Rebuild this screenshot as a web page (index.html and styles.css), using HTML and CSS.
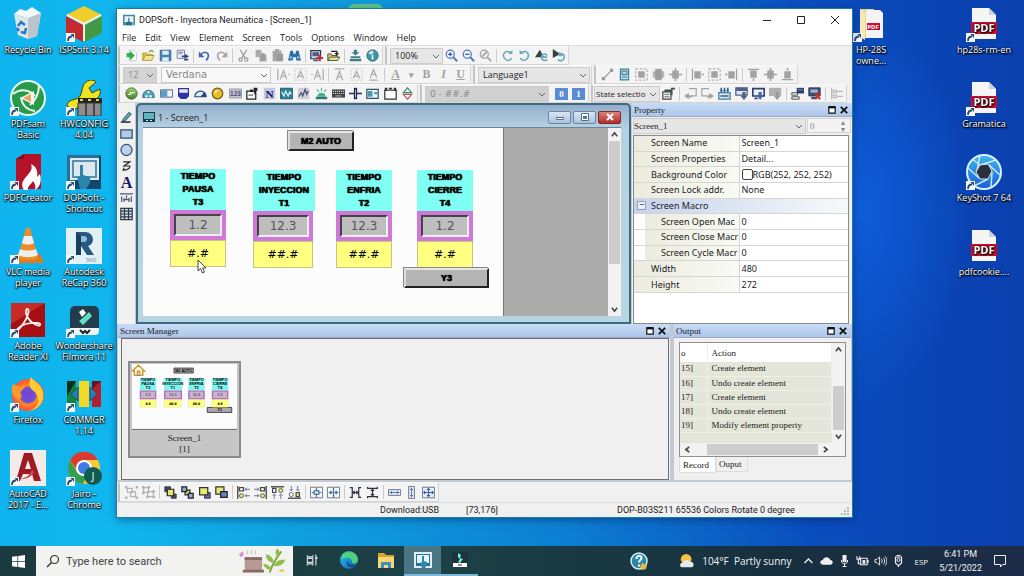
FILE: index.html
```html
<!DOCTYPE html>
<html lang="en">
<head>
<meta charset="utf-8">
<title>DOPSoft - Inyectora Neumática</title>
<link rel="stylesheet" href="styles.css">
</head>
<body>
<svg class="sprite" aria-hidden="true">
  <defs>
    <linearGradient id="gGreen" x1="0" y1="0" x2="0" y2="1"><stop offset="0" stop-color="#9fd36a"/><stop offset="1" stop-color="#3f7f2c"/></linearGradient>
    <radialGradient id="gFox"><stop offset="0" stop-color="#7a3fd0"/><stop offset=".45" stop-color="#6a4fd8"/><stop offset=".6" stop-color="#ff8a1f"/><stop offset="1" stop-color="#ff4a3d"/></radialGradient>
    <linearGradient id="gEdge" x1="0" y1="0" x2="1" y2="1"><stop offset="0" stop-color="#2fc3e6"/><stop offset=".5" stop-color="#1b8fd8"/><stop offset="1" stop-color="#0c4fa5"/></linearGradient>
    <linearGradient id="gShut" x1="0" y1="0" x2="0" y2="1"><stop offset="0" stop-color="#3fb6e8"/><stop offset="1" stop-color="#1a5fd8"/></linearGradient>
  </defs>
  <symbol id="link" viewBox="0 0 9 9"><path fill="#f4f8fb" d="M0 0h9v9H0z"/><path fill="none" stroke="#2b4a70" stroke-width="1.8" d="M2 8c0-3 1-4.500 4-4.500"/><path fill="#2b4a70" d="M4.500 1H8v4z"/></symbol>
  <symbol id="app" viewBox="0 0 16 16"><path fill="#3d8aa5" d="M0 1h16v14H0z"/><path fill="#e8f4f8" d="M2 3h12v8H2z"/><path fill="#2a6f90" d="M4 15v-4l3-1V5h1.500v5l3 1v4z"/><path fill="#72b6cc" d="M12 11h3v4h-3z"/></symbol>
  <symbol id="doc" viewBox="0 0 16 16"><path fill="#fff" stroke="#b9c4cc" d="M5 1.500h6l3 3v10H5z"/><path fill="#2fae4e" d="M2 5h4V2l6 6-6 6v-4H2z"/></symbol>
  <symbol id="open" viewBox="0 0 16 16"><path fill="#e5c64c" stroke="#ab8f2a" d="M1 14V5h5l1 2h6v2"/><path fill="#f6e58f" stroke="#ab8f2a" d="M1 14l3-6h11l-3 6z"/><path fill="none" stroke="#5f9a3a" stroke-width="1.500" d="M9 4c1-3 4-2 5 0"/></symbol>
  <symbol id="save" viewBox="0 0 16 16"><path fill="#4684b5" stroke="#2d5f8c" d="M1.500 1.500h13v13h-13z"/><path fill="#dceaf3" d="M4 2h8v5H4zM4 10h8v5H4z"/></symbol>
  <symbol id="export" viewBox="0 0 16 16"><path fill="#f4f4fb" stroke="#666c90" d="M1.500 1.500h9v10h-9z"/><path stroke="#56599b" d="M3 4h6M3 6h4"/><path fill="none" stroke="#37417f" stroke-width="2" d="M7 9h6M10 13h5"/><path fill="#37417f" d="M11 6l5 3-5 3z"/></symbol>
  <symbol id="undo" viewBox="0 0 16 16"><path fill="none" stroke="#3d63ae" stroke-width="2" d="M4 6c7-5 12 1 6 8"/><path fill="#3d63ae" d="M1 3v7h7z"/></symbol>
  <symbol id="redo" viewBox="0 0 16 16"><path fill="none" stroke="#a4a4a4" stroke-width="2" d="M12 6C5 1 0 7 6 14"/><path fill="#a4a4a4" d="M15 3v7H8z"/></symbol>
  <symbol id="cut" viewBox="0 0 16 16"><path fill="none" stroke="#9c9c9c" stroke-width="1.500" d="M4 1l6 10M12 1L6 11"/><circle cx="4.500" cy="13" r="2" fill="none" stroke="#9c9c9c" stroke-width="1.500"/><circle cx="11.500" cy="13" r="2" fill="none" stroke="#9c9c9c" stroke-width="1.500"/></symbol>
  <symbol id="copy" viewBox="0 0 16 16"><path fill="#a9a9a9" d="M2 1h7v9H2z"/><path fill="#9d9d9d" stroke="#c4c4c4" d="M7 5h5l3 3v7H7z"/></symbol>
  <symbol id="paste" viewBox="0 0 16 16"><path fill="#a6a6a6" d="M2 2h3V0h5v2h3v13H2z"/><path fill="#989898" d="M7 6h8v9H7z"/></symbol>
  <symbol id="find" viewBox="0 0 16 16"><path fill="#2b6cae" d="M3 2h3l1 4h2l1-4h3l3 12h-6v-4H6v4H0z"/><path fill="#87b8e0" d="M2 9h3v3H2zM11 9h3v3h-3z"/></symbol>
  <symbol id="newscr" viewBox="0 0 16 16"><path fill="#cfdbe8" stroke="#2e3355" stroke-width="1.500" d="M1 2h12v10H1z"/><path fill="#4a5a80" d="M3 4h8v5H3zM4 13h6v2H4z"/><path stroke="#c9282b" stroke-width="2.500" d="M12 7v8M8 11h8"/></symbol>
  <symbol id="openscr" viewBox="0 0 16 16"><path fill="#d6c65c" stroke="#40402a" d="M1 14V6h4l1 2h7v6z"/><path fill="#f3e9a0" stroke="#40402a" d="M1 14l3-4h12l-3 4z"/><path fill="none" stroke="#222" stroke-width="1.500" d="M5 3h7v3"/><path fill="#222" d="M9 5h6l-3 3z"/></symbol>
  <symbol id="down" viewBox="0 0 16 16"><path fill="#3e7f86" d="M6 1h4v3h3L8 8 3 4h3zM2 9h12v2H2zM1 12h14v3H1z"/></symbol>
  <symbol id="info" viewBox="0 0 16 16"><circle cx="8" cy="8" r="7" fill="#3f95a8" stroke="#246576"/><path fill="#b9e4ec" d="M3 6a5 5 0 0 1 6-4l-2 5z"/><path stroke="#fff" stroke-width="2" d="M8 7v6M8 3.500v2"/></symbol>
  <symbol id="zin" viewBox="0 0 16 16"><circle cx="6.500" cy="6.500" r="5" fill="#eef4ff" stroke="#5377b8" stroke-width="1.500"/><path stroke="#5377b8" stroke-width="2.500" d="M10 10l5 5"/><path stroke="#2f56a4" stroke-width="1.500" d="M4 6.500h5M6.500 4v5"/></symbol>
  <symbol id="zout" viewBox="0 0 16 16"><circle cx="6.500" cy="6.500" r="5" fill="#eef4ff" stroke="#5377b8" stroke-width="1.500"/><path stroke="#5377b8" stroke-width="2.500" d="M10 10l5 5"/><path stroke="#2f56a4" stroke-width="1.500" d="M4 6.500h5"/></symbol>
  <symbol id="zno" viewBox="0 0 16 16"><circle cx="6.500" cy="6.500" r="5" fill="#f1f1f1" stroke="#a0a0a0" stroke-width="1.500"/><path stroke="#a0a0a0" stroke-width="2" d="M10 10l5 5M3.500 9.500l6-6"/></symbol>
  <symbol id="rotl" viewBox="0 0 16 16"><path fill="none" stroke="#6aa5b8" stroke-width="1.800" d="M11 4C6 1 1 6 4 11s8 3 9 0"/><path fill="#6aa5b8" d="M9 6h5V1z"/></symbol>
  <symbol id="rotr" viewBox="0 0 16 16"><path fill="none" stroke="#6aa5b8" stroke-width="1.800" d="M5 4c5-3 10 2 7 7s-8 3-9 0"/><path fill="#6aa5b8" d="M7 6H2V1z"/></symbol>
  <symbol id="flipa" viewBox="0 0 16 16"><path fill="#35413f" d="M0 10L6 1l5 9z"/><path fill="none" stroke="#6aa5b8" stroke-width="2" d="M15 8c-2-3-7-2-7 2s5 5 7 3M9 10h6"/></symbol>
  <symbol id="flipb" viewBox="0 0 16 16"><path fill="#35413f" d="M1 0l9 6-9 5z"/><path fill="none" stroke="#6aa5b8" stroke-width="2" d="M8 7c4-3 8 0 7 4s-5 4-8 2M9 4v4h4"/></symbol>
  <symbol id="fa1" viewBox="0 0 16 16"><path fill="none" stroke="#aaa" stroke-width="1.500" d="M1 1v14M4 14L8 3l4 11M5.500 10h5M14 8h2"/></symbol>
  <symbol id="fa2" viewBox="0 0 16 16"><path fill="none" stroke="#aaa" stroke-width="1.500" d="M4 13L8 4l4 9M5.500 10h5"/><path fill="none" stroke="#bbb" stroke-dasharray="2" d="M1 1h14v14H1z"/></symbol>
  <symbol id="fa3" viewBox="0 0 16 16"><path fill="none" stroke="#aaa" stroke-width="1.500" d="M15 1v14M4 14L8 3l4 11M5.500 10h5M0 8h2"/></symbol>
  <symbol id="fa4" viewBox="0 0 16 16"><path fill="none" stroke="#aaa" stroke-width="1.500" d="M2 1h12M4 15L8 4l4 11M5.500 11h5"/></symbol>
  <symbol id="fa5" viewBox="0 0 16 16"><path fill="none" stroke="#aaa" stroke-width="1.500" d="M3 15h10M4 12L8 2l4 10M5.500 8h5"/></symbol>
  <symbol id="line" viewBox="0 0 16 16"><path stroke="#999" stroke-width="1.500" d="M3 13L13 3"/><path fill="#999" d="M1 11h4v4H1zM11 1h4v4h-4z"/></symbol>
  <symbol id="bluedoc" viewBox="0 0 16 16"><path fill="#b9dbea" stroke="#3f7f9a" stroke-width="1.500" d="M3 1.500h10v13H3z"/><path fill="none" stroke="#24617e" d="M5 4h6v4H5zM5 11h6"/></symbol>
  <symbol id="al1" viewBox="0 0 16 16"><path fill="#a2a2a2" d="M4 4h8v8H4z"/><path fill="none" stroke="#b0b0b0" stroke-dasharray="3 2" stroke-width="1.500" d="M1 1h14v14H1z"/></symbol>
  <symbol id="al2" viewBox="0 0 16 16"><path fill="#a2a2a2" d="M4 1h8v14H4z"/><path fill="#b6b6b6" d="M1 4h14v8H1z"/><path fill="#9c9c9c" d="M4 3h8v10H4z"/></symbol>
  <symbol id="al3" viewBox="0 0 16 16"><path fill="#a2a2a2" d="M4 3h8v10H4zM0 7h16v2H0zM7 0h2v16H7z"/></symbol>
  <symbol id="al4" viewBox="0 0 16 16"><path fill="#a2a2a2" d="M1 1h1.500v14H1zM4 4h8v9H4zM13 7h3v2h-3z"/></symbol>
  <symbol id="al5" viewBox="0 0 16 16"><path fill="#a2a2a2" d="M13.500 1H15v14h-1.500zM4 4h8v9H4zM0 7h3v2H0z"/></symbol>
  <symbol id="al6" viewBox="0 0 16 16"><path fill="#a2a2a2" d="M1 1h14v1.500H1zM4 3h8v9H4zM7 13h2v3H7z"/></symbol>
  <symbol id="al7" viewBox="0 0 16 16"><path fill="#a2a2a2" d="M1 13.500h14V15H1zM4 4h8v9H4zM7 0h2v3H7z"/></symbol>
  <symbol id="e1" viewBox="0 0 16 16"><circle cx="8" cy="8" r="7" fill="url(#gGreen)" stroke="#4d5b40"/><path fill="none" stroke="#eaffd8" stroke-width="1.500" d="M4 9h3V7h5"/></symbol>
  <symbol id="e2" viewBox="0 0 16 16"><path fill="#4fa3b5" stroke="#1f5f70" d="M1 11a7 7 0 0 1 14 0v2H1z"/><path fill="#e6f5f8" d="M4 10h3v3H4zM9 10h3v3H9zM7 5h2v3H7z"/></symbol>
  <symbol id="e3" viewBox="0 0 16 16"><path fill="#eef6fb" stroke="#364e66" d="M.5 3.500h15v9H.5z"/><path fill="#5b9dc8" d="M1 4h8v8H1z"/></symbol>
  <symbol id="e4" viewBox="0 0 16 16"><path fill="#e8e8fa" stroke="#33368a" stroke-width="1.500" d="M2 2h12v9l-3 3H5l-3-3z"/><path fill="#2f33a8" d="M2 7h12v4l-3 3H5l-3-3z"/></symbol>
  <symbol id="e5" viewBox="0 0 16 16"><path fill="#d6ebf7" stroke="#2b4b66" stroke-width="1.500" d="M1 12a7 7 0 0 1 14 0z"/><path fill="#243b86" d="M8 12l5-6 2 6z"/></symbol>
  <symbol id="e6" viewBox="0 0 16 16"><circle cx="8" cy="8" r="6.500" fill="#e6bd2b" stroke="#6e5a1a" stroke-width="1.500"/><path fill="#fbe992" d="M4 7a4 4 0 0 1 5-3l-3 4z"/></symbol>
  <symbol id="e7" viewBox="0 0 16 16"><path fill="#c5c5d2" stroke="#88889c" d="M.5 2.500h15v11H.5z"/><text class="g123" x="8" y="11">123</text></symbol>
  <symbol id="e8" viewBox="0 0 16 16"><path fill="#fbfbfb" stroke="#222" stroke-width="1.500" d="M1 5h11v10H1z"/><path fill="#222" d="M5 3h4v3H5zM9 1h5v4h-2v4h-2V4z"/><path stroke="#222" d="M3 10h6"/></symbol>
  <symbol id="e9" viewBox="0 0 16 16"><path fill="#c7c7de" d="M1 1h14v14H1z"/><text class="gn" x="8" y="13">N</text></symbol>
  <symbol id="e10" viewBox="0 0 16 16"><path fill="#2c7f94" stroke="#174f5e" d="M.5 1.500h15v13H.5z"/><path fill="none" stroke="#d4f4fa" stroke-width="1.500" d="M2 6l3 5 2-6 3 6 2-5 2 3"/></symbol>
  <symbol id="e11" viewBox="0 0 16 16"><path fill="#cfcfdc" d="M1 1h14v14H1z"/><path fill="none" stroke="#4a4a74" stroke-width="1.500" d="M2 12l3-5 2 4 3-8 2 6 2-4"/></symbol>
  <symbol id="e12" viewBox="0 0 16 16"><path fill="#48b08c" d="M3 12a5 5 0 0 1 10 0z"/><path fill="#277a72" d="M1 12h14v3H1z"/><path stroke="#55b8a2" stroke-width="1.500" d="M8 1v4M2 3l3 3M14 3l-3 3"/></symbol>
  <symbol id="e13" viewBox="0 0 16 16"><path fill="#3e3e3e" d="M0 3h16v10H0z"/><path stroke="#d2d2d2" stroke-dasharray="1.500 1" stroke-width="1.500" d="M1 5.500h14M1 8h14"/><path stroke="#d2d2d2" d="M4 11h8"/></symbol>
  <symbol id="e14" viewBox="0 0 16 16"><path stroke="#36366a" stroke-width="2" d="M0 8h16"/><path fill="#20205a" d="M6 1h4v14H6z"/><path stroke="#ddb" d="M8 3v10"/></symbol>
  <symbol id="e15" viewBox="0 0 16 16"><path fill="#eef8fa" stroke="#2c5664" stroke-width="1.500" d="M1 3h14v11H1z"/><path fill="#4b9bb0" d="M2 5h6v7H2zM10 6h4v3h-4z"/></symbol>
  <symbol id="e16" viewBox="0 0 16 16"><path fill="#fff" stroke="#333" stroke-width="1.500" d="M1 4h14v11H1z"/><path fill="#333" d="M1 1h3v4H1zM6 1h4v2H6zM12 1h3v4h-3z"/></symbol>
  <symbol id="e17" viewBox="0 0 16 16"><path fill="#fff" stroke="#3b8a70" stroke-width="1.500" d="M8 1l5 6H3z"/><path fill="#fff" stroke="#b75a66" stroke-width="1.500" d="M3 9h10l-5 6z"/></symbol>
  <symbol id="s1" viewBox="0 0 16 16"><path fill="#eee" stroke="#444" stroke-width="1.500" d="M1 6h10v9H1z"/><path fill="#3d5055" d="M3 3h8v3H3zM11 1h5v2h-3v7h-2z"/><path stroke="#555" d="M3 9h6M3 12h6"/></symbol>
  <symbol id="s2" viewBox="0 0 16 16"><path fill="none" stroke="#a5a5a5" stroke-width="1.500" d="M6 2h9v9H9"/><path fill="#a5a5a5" d="M0 11l6-4v3h4v3H6v2z"/></symbol>
  <symbol id="s3" viewBox="0 0 16 16"><path fill="none" stroke="#a5a5a5" stroke-width="1.500" d="M10 2H1v9h6"/><path fill="#a5a5a5" d="M16 11l-6-4v3H7v3h3v2z"/></symbol>
  <symbol id="s4" viewBox="0 0 16 16"><path fill="#d5e6f2" stroke="#4a7d9e" stroke-width="1.500" d="M1 7h14v8H1z"/><path fill="#35678a" d="M3 1h2v3h1L4 7 2 4h1zM7 1h2v3h1L8 7 6 4h1zM11 1h2v3h1l-2 3-2-3h1zM3 10h10v2H3z"/></symbol>
  <symbol id="s5" viewBox="0 0 16 16"><path fill="#e2e8f6" stroke="#50608c" stroke-width="1.500" d="M1 1h14v9H1z"/><path fill="#50608c" d="M1 1h14v4H1zM9 6h4v5h2l-4 5-4-5h2z"/></symbol>
  <symbol id="s6" viewBox="0 0 16 16"><path fill="#edf1fb" stroke="#303e6c" stroke-width="2" d="M1 2h14v9H1z"/><path fill="#4763ad" d="M8 6h4v4h2l-4 6-4-6h2z"/><path fill="#303e6c" d="M3 13h4v2H3z"/></symbol>
  <symbol id="s7" viewBox="0 0 16 16"><path fill="#b0b0b0" d="M0 1h15v10H0z"/><path fill="#9a9a9a" d="M8 6h4v5h2l-4 5-4-5h2z"/></symbol>
  <symbol id="s8" viewBox="0 0 16 16"><path fill="#2c3f6e" d="M7 1h9v7H7z"/><path fill="#86a5cf" d="M8 3h7v1H8z"/><path fill="#eee" stroke="#333" d="M1 7h7v3H1zM1 12h9v3H1z"/></symbol>
  <symbol id="s9" viewBox="0 0 16 16"><path fill="#3e4d76" stroke="#222e4a" d="M1 1h14v10H1z"/><path fill="#9db3d6" d="M3 3h9v4H3z"/><path fill="#3e4d76" d="M4 12h6v3H4z"/><path stroke="#c5302b" stroke-width="2.500" d="M9 8l6 7M15 8l-6 7"/></symbol>
  <symbol id="s10" viewBox="0 0 16 16"><path fill="none" stroke="#b9b9b9" stroke-width="1.500" d="M2 1v14M4 4h4v3H4zM4 10h4v3H4zM9 5.500h7M9 11.500h7"/></symbol>
  <symbol id="t1" viewBox="0 0 16 16"><path fill="#5aa0a8" stroke="#2c4c4c" d="M4 9l7-8 3 2-7 8-4 1z"/><path fill="#333" d="M1 12h12v2H1z"/></symbol>
  <symbol id="t2" viewBox="0 0 16 16"><path fill="#aecbea" stroke="#334a6a" stroke-width="1.500" d="M1 3h14v10H1z"/></symbol>
  <symbol id="t3" viewBox="0 0 16 16"><circle cx="8" cy="8" r="6.800" fill="#b9d4f0" stroke="#334a6a" stroke-width="1.500"/></symbol>
  <symbol id="t4" viewBox="0 0 16 16"><path fill="none" stroke="#222" stroke-width="1.500" d="M4 3h8L5 8h7c1 3-4 5-8 5l1-3"/></symbol>
  <symbol id="t5" viewBox="0 0 16 16"><text class="ga" x="8" y="15">A</text></symbol>
  <symbol id="t6" viewBox="0 0 16 16"><path fill="none" stroke="#4a5a77" stroke-width="1.500" d="M0 3h16M2 6v7M14 6v7M5 8v5M11 8v5M8 5v4M4 10h8"/></symbol>
  <symbol id="t7" viewBox="0 0 16 16"><path fill="#dde5ef" stroke="#2c3747" stroke-width="1.500" d="M1 1h14v14H1zM1 4.500h14M1 8h14M1 11.500h14M5.500 1v14M10.500 1v14"/></symbol>
  <symbol id="b1" viewBox="0 0 16 16"><path fill="none" stroke="#b3b3b3" stroke-width="1.500" d="M3 3h6v5H3zM7 7h6v6H7z"/><path fill="#b3b3b3" d="M0 0h3v3H0zM13 0h3v3h-3zM0 13h3v3H0zM13 13h3v3h-3z"/></symbol>
  <symbol id="b2" viewBox="0 0 16 16"><path fill="none" stroke="#b3b3b3" stroke-width="1.500" d="M2 2h6v6H2zM7 7h7v6H7z"/><path fill="#b3b3b3" d="M0 0h3v3H0zM7 0h3v3H7zM0 7h3v3H0zM13 5h3v3h-3zM5 12h3v3H5zM13 12h3v3h-3z"/></symbol>
  <symbol id="b3" viewBox="0 0 16 16"><path fill="#47557d" stroke="#222" d="M1 1h7v6H1zM9 10h6v5H9z"/><path fill="#e9e568" stroke="#222" stroke-width="1.500" d="M4 4h8v8H4z"/></symbol>
  <symbol id="b4" viewBox="0 0 16 16"><path fill="#e9e568" stroke="#222" stroke-width="1.500" d="M5 5h6v6H5z"/><path fill="#8fa8d8" stroke="#222" stroke-width="1.500" d="M1 1h6v6H1zM9 9h6v6H9z"/></symbol>
  <symbol id="b5" viewBox="0 0 16 16"><path fill="#5c6ea2" stroke="#222" d="M8 8h7v7H8z"/><path fill="#ece874" stroke="#333" stroke-width="1.500" d="M2 2h10v9H2z"/></symbol>
  <symbol id="b6" viewBox="0 0 16 16"><path fill="#ece874" stroke="#333" stroke-width="1.500" d="M1 1h10v9H1z"/><path fill="#6b83c4" stroke="#222" stroke-width="1.500" d="M7 7h8v7H7z"/></symbol>
  <symbol id="b7" viewBox="0 0 16 16"><path stroke="#333" stroke-width="1.500" d="M1 0v16"/><path fill="#fff" stroke="#444" stroke-width="1.500" d="M3 2h5v4H3z"/><circle cx="5.500" cy="12" r="2.500" fill="#ece874" stroke="#444"/><path stroke="#4a5f96" d="M10 4h6M10 12h6M12 2l-2 2 2 2M12 10l-2 2 2 2" fill="none"/></symbol>
  <symbol id="b8" viewBox="0 0 16 16"><path stroke="#333" stroke-width="1.500" d="M15 0v16"/><path fill="#fff" stroke="#444" stroke-width="1.500" d="M8 2h5v4H8z"/><circle cx="10.500" cy="12" r="2.500" fill="#ece874" stroke="#444"/><path stroke="#4a5f96" d="M0 4h6M0 12h6M4 2l2 2-2 2M4 10l2 2-2 2" fill="none"/></symbol>
  <symbol id="b9" viewBox="0 0 16 16"><path stroke="#333" stroke-width="1.500" d="M0 1h16"/><path fill="#fff" stroke="#444" stroke-width="1.500" d="M2 3h4v5H2z"/><circle cx="12" cy="5.500" r="2.500" fill="#ece874" stroke="#444"/><path stroke="#4a5f96" fill="none" d="M4 10v6M12 10v6M2 12l2-2 2 2M10 12l2-2 2 2"/></symbol>
  <symbol id="b10" viewBox="0 0 16 16"><path stroke="#333" stroke-width="1.500" d="M0 15h16"/><path fill="#ece874" stroke="#444" stroke-width="1.500" d="M10 8h4v5h-4z"/><circle cx="4" cy="10.500" r="2.500" fill="#fff" stroke="#444"/><path stroke="#4a5f96" fill="none" d="M4 0v6M12 0v6M2 4l2 2 2-2M10 4l2 2 2-2"/></symbol>
  <symbol id="b11" viewBox="0 0 16 16"><path fill="#f6f9fc" stroke="#555f6e" d="M.5 1.500h15v13H.5z"/><path fill="none" stroke="#4a6a9a" stroke-width="1.500" d="M8 2v4M8 10v4M5 6h6v4H5zM2 8h2M12 8h2"/></symbol>
  <symbol id="b12" viewBox="0 0 16 16"><path fill="#f6f9fc" stroke="#555f6e" d="M.5 1.500h15v13H.5z"/><path fill="none" stroke="#4a6a9a" stroke-width="1.500" d="M8 2v12M2 8h4M10 8h4M4 6l2 2-2 2M12 6l-2 2 2 2"/></symbol>
  <symbol id="b13" viewBox="0 0 16 16"><path fill="none" stroke="#2c333d" stroke-width="1.500" d="M1 2h3v12H1M15 2h-3v12h3M4 8h8M7 6L5 8l2 2M9 6l2 2-2 2"/></symbol>
  <symbol id="b14" viewBox="0 0 16 16"><path fill="none" stroke="#2c333d" stroke-width="1.500" d="M2 1v2h12V1M2 15v-2h12v2M8 4v8M6 6l2-2 2 2M6 10l2 2 2-2"/></symbol>
  <symbol id="b15" viewBox="0 0 16 16"><path fill="#e9f1fa" stroke="#4f5b73" d="M.5 4.500h15v7H.5z"/><path fill="none" stroke="#3c5f9c" d="M2 8h12M5 6L3 8l2 2M11 6l2 2-2 2"/></symbol>
  <symbol id="b16" viewBox="0 0 16 16"><path fill="#e9f1fa" stroke="#4f5b73" d="M4.500.5h7v15h-7z"/><path fill="none" stroke="#3c5f9c" d="M8 2v12M6 5l2-2 2 2M6 11l2 2 2-2"/></symbol>
  <symbol id="b17" viewBox="0 0 16 16"><path fill="#e9f1fa" stroke="#4f5b73" d="M.5 1.500h15v13H.5z"/><path fill="none" stroke="#3c5f9c" stroke-width="1.300" d="M8 3v10M2 8h12M6 5l2-2 2 2M6 11l2 2 2-2M4 6L2 8l2 2M12 6l2 2-2 2"/></symbol>
  <symbol id="restore" viewBox="0 0 10 10"><path fill="#fff" stroke="#111" stroke-width="1.500" d="M1 1h8v8H1z"/><path fill="#111" d="M1 0h8v3H1z"/></symbol>
  <symbol id="cross" viewBox="0 0 10 10"><path stroke="#111" stroke-width="2.200" d="M1 1l8 8M9 1L1 9"/></symbol>
  <symbol id="up" viewBox="0 0 8 8"><path fill="none" stroke="#444" stroke-width="1.800" d="M1 6l3-4 3 4"/></symbol>
  <symbol id="dn" viewBox="0 0 8 8"><path fill="none" stroke="#444" stroke-width="1.800" d="M1 2l3 4 3-4"/></symbol>
  <symbol id="lf" viewBox="0 0 8 8"><path fill="none" stroke="#444" stroke-width="1.800" d="M6 1L2 4l4 3"/></symbol>
  <symbol id="rt" viewBox="0 0 8 8"><path fill="none" stroke="#444" stroke-width="1.800" d="M2 1l4 3-4 3"/></symbol>
  <symbol id="pdf" viewBox="0 0 36 36"><path fill="#f5f5f6" d="M6 2h17l7 7v24H6z"/><path fill="#cfd3d8" d="M23 2l7 7h-7z"/><path fill="#c8102e" d="M5 16h26v12H5z"/><text class="gpdf" x="18" y="26">PDF</text></symbol>
</svg>

<main class="desktop">
  <div class="peek"></div>
  <section class="icons icons-left" aria-label="Desktop shortcuts">
    <a class="ico" href="#"><svg viewBox="0 0 36 36"><path fill="#dfe6ea" d="M4 8l14 4 13-5-4 23-9 3-10-4z"/><path fill="#b9c5cd" d="M18 12l13-5-4 23-9 3z"/><path fill="#f5f8fa" d="M4 8l6-5 6 2 6-4 9 6-13 5z"/><path fill="none" stroke="#2478c4" stroke-width="2.500" d="M8 20l3-4 4 3M16 22l-1 5-4-1M9 25l-2-3"/></svg><span>Recycle Bin</span></a>
    <a class="ico" href="#"><svg viewBox="0 0 36 36"><path fill="#f0cf2c" d="M18 0l18 9-18 9L0 9z"/><path fill="#c22a30" d="M0 10l17 9v17L0 27z"/><path fill="#3f9a43" d="M36 10l-17 9v17l17-9z"/><path fill="none" stroke="#f1f1df" stroke-width="2" d="M1 9l17 9 17-9M18 18v17"/></svg><svg class="ln"><use href="#link"/></svg><span>ISPSoft 3.14</span></a>
    <a class="ico" href="#"><svg viewBox="0 0 36 36"><circle cx="18" cy="18" r="17" fill="#279b4a" stroke="#e7f7ea" stroke-width="2"/><path fill="none" stroke="#eefaf0" stroke-width="2" d="M3 14c8-6 17-4 22 2M29 5c0 8-2 14-9 20M25 31c-8-1-13-5-14-14"/><path fill="#f2f8ee" d="M10 18l14-7v14z"/><path fill="#e8a45a" d="M13 18l8-4v8z"/></svg><svg class="ln"><use href="#link"/></svg><span>PDFsam<br>Basic</span></a>
    <a class="ico" href="#"><svg viewBox="0 0 36 36"><path fill="#efe51f" stroke="#414014" d="M1 26c0-5 5-6 9-7 8-2 4-13 10-17 4-3 8-2 10 0l-7 6 3 5 8-4c2 8-5 12-11 11L8 30z"/><path fill="#222" d="M12 18h24v5H12z"/><path fill="#8d8d8d" stroke="#333" d="M12 23h8v13h-8zM20 23h8v13h-8zM28 23h7v13h-7z"/><path stroke="#dede32" stroke-width="2" d="M14 20h3M22 20h3M30 20h3"/></svg><svg class="ln"><use href="#link"/></svg><span>HWCONFIG<br>4.04</span></a>
    <a class="ico" href="#"><svg viewBox="0 0 36 36"><path fill="#b3132b" d="M6 5l8-5h17v35H6z"/><path fill="#7d0d1f" d="M6 5h8V0z"/><path fill="#fff" d="M14 36C9 28 16 24 20 18c2-3 2-5 1-8 6 3 7 8 6 13l3-3c2 7 0 13-5 16 1-4 0-6-2-9-2 4-6 5-5 9z"/></svg><svg class="ln"><use href="#link"/></svg><span>PDFCreator</span></a>
    <a class="ico" href="#"><svg viewBox="0 0 36 36"><path fill="#2b6e98" d="M1 1h34v34H1z"/><path fill="#12466b" d="M35 1v34H1z"/><path fill="#dcebf2" d="M4 4h29v22H4z"/><path fill="#5a90ad" d="M6 6h25v18H6z"/><path fill="#dbe9f0" d="M8 8h21v14H8z"/><path fill="#2e85ac" d="M11 23l3-1V11h3v10l7 2v6l-4 6h-6z"/></svg><svg class="ln"><use href="#link"/></svg><span>DOPSoft -<br>Shortcut</span></a>
    <a class="ico" href="#"><svg viewBox="0 0 36 36"><path fill="#e07a1e" d="M6 26h24l4 9H2z"/><path fill="#f08b28" d="M16 0h4l8 30c-5 3-15 3-20 0z"/><path fill="#eef0f0" d="M14 8h8l2 7c-3 2-9 2-12 0zM10 21c5 2 11 2 16 0l2 6c-6 3-14 3-20 0z"/></svg><svg class="ln"><use href="#link"/></svg><span>VLC media<br>player</span></a>
    <a class="ico" href="#"><svg viewBox="0 0 36 36"><path fill="#e2f0f8" d="M0 0h36v36H0z"/><path fill="#27597f" d="M10 4h9c9 0 11 12 3 14l6 9h-7l-6-9v9h-5z"/><path fill="#8fbdd8" d="M15 8h3c4 0 4 6 0 6h-3z"/><path fill="#17405f" d="M10 4l5 4v19h-5z"/><text class="g360" x="25" y="34">360</text></svg><svg class="ln"><use href="#link"/></svg><span>Autodesk<br>ReCap 360</span></a>
    <a class="ico" href="#"><svg viewBox="0 0 36 36"><path fill="#a80f12" d="M1 1h34v34H1z"/><path fill="#c82a26" d="M1 1h34L1 22z"/><path fill="none" stroke="#fbeeee" stroke-width="1.800" d="M17 7c4 0 0 12-9 21-3 2 0-4 8-6s16-1 14 1-12-3-14-12c0-3 0-4 1-4z"/></svg><svg class="ln"><use href="#link"/></svg><span>Adobe<br>Reader XI</span></a>
    <a class="ico" href="#"><svg viewBox="0 0 36 36"><rect x="4" y="4" width="29" height="29" rx="5" fill="#233d4c"/><path fill="#f1f5f6" d="M4 26h29v3a4 4 0 0 1-4 4H8a4 4 0 0 1-4-4z"/><path fill="#5fe0c1" d="M19 14l4-4 3 4-9 9-4-4z"/><path fill="#fff" d="M13 10l4-3 3 4-4 4z"/><path fill="none" stroke="#222" stroke-width="2" d="M14 28l3 3 2-2 2 2 3-3"/></svg><svg class="ln"><use href="#link"/></svg><span>Wondershare<br>Filmora 11</span></a>
    <a class="ico" href="#"><svg viewBox="0 0 36 36"><circle cx="18" cy="19" r="16" fill="url(#gFox)"/><path fill="#ffcb32" d="M21 1c2 4 10 6 12 15 2 10-5 18-14 19 8-3 11-9 8-16-2-4-6-5-7-8s-1-6 1-10z"/><path fill="#ff9a28" d="M3 8c3 2 7 2 12 3l-5 5 2 5c-3 1-5 3-8 0-2-4-3-8-1-13z"/></svg><svg class="ln"><use href="#link"/></svg><span>Firefox</span></a>
    <a class="ico" href="#"><svg viewBox="0 0 36 36"><path fill="#10833c" d="M1 5h9v26H1z"/><path fill="#062f18" d="M1 5h9L1 20z"/><path fill="#f2d923" d="M13 5h10v26H13z"/><path fill="#b3202e" d="M26 5h9v26h-9z"/><path fill="#651420" d="M26 5h9l-9 8z"/><path fill="#2d7ab8" stroke="#19506f" d="M12 11v14l-7-7zM24 11v14l7-7z"/></svg><svg class="ln"><use href="#link"/></svg><span>COMMGR<br>1.14</span></a>
    <a class="ico" href="#"><svg viewBox="0 0 36 36"><path fill="#f4ebe9" d="M0 0h36v36H0z"/><path fill="#9d1c24" d="M14 3h8l9 28h-7l-2-7h-9l-3 7H6z"/><path fill="#f4ebe9" d="M15 19l3-9 3 9z"/><path fill="#c94a4d" d="M9 28c6 1 11-2 13-9l2 3c-3 6-9 8-15 6z"/></svg><svg class="ln"><use href="#link"/></svg><span>AutoCAD<br>2017 - E...</span></a>
    <a class="ico" href="#"><svg viewBox="0 0 36 36"><circle cx="18" cy="18" r="16" fill="#f6c83a"/><path fill="#d93a32" d="M4 10a16 16 0 0 1 28 0H18l-6 12z"/><path fill="#31a04e" d="M4 10l8 14 9 0-4 10A16 16 0 0 1 4 10z"/><circle cx="18" cy="18" r="8" fill="#fff"/><circle cx="18" cy="18" r="6" fill="#3f7ce8"/><circle cx="27" cy="26" r="9" fill="#0f5b4f"/><text class="gj" x="27" y="30">J</text></svg><svg class="ln"><use href="#link"/></svg><span>Jairo -<br>Chrome</span></a>
  </section>

  <section class="icons icons-right" aria-label="Documents">
    <a class="ico" href="#"><svg viewBox="0 0 36 36"><path fill="#ecd486" d="M7 3h14v29H7z"/><path fill="#f7eab8" d="M7 3l5 3v28l-5-3z"/><path fill="#f4f4f4" d="M13 4h14l3 3v25H13z"/><path fill="#c8102e" d="M14 17h13v7H14z"/><text class="gpdf small" x="20" y="23">PDF</text></svg><svg class="ln"><use href="#link"/></svg><span>HP-28S<br>owne...</span></a>
    <a class="ico" href="#"><svg><use href="#pdf"/></svg><svg class="ln"><use href="#link"/></svg><span>hp28s-rm-en</span></a>
    <a class="ico col2" href="#"><svg><use href="#pdf"/></svg><svg class="ln"><use href="#link"/></svg><span>Gramatica</span></a>
    <a class="ico col2" href="#"><svg viewBox="0 0 36 36"><circle cx="18" cy="18" r="17" fill="url(#gShut)" stroke="#d9f0fb" stroke-width="2"/><path fill="none" stroke="#c9e9fa" stroke-width="1.500" d="M14 11L6 5M14 11L30 6M23 11l11 10M26 18L25 33M22 25L8 32M13 24L2 14M11 17L14 1"/><path fill="#2b2f3a" stroke="#c9e9fa" d="M14 11l8-1 4 7-4 8h-8l-4-7z"/></svg><svg class="ln"><use href="#link"/></svg><span>KeyShot 7 64</span></a>
    <a class="ico col2" href="#"><svg><use href="#pdf"/></svg><span>pdfcookie....</span></a>
  </section>

  <section class="window">
    <header class="titlebar">
      <svg class="app"><use href="#app"/></svg>
      <h1>DOPSoft - Inyectora Neumática - [Screen_1]</h1>
      <div class="wctl">
        <button aria-label="Minimize"><svg viewBox="0 0 10 10"><path stroke="#222" d="M1 5.500h8"/></svg></button>
        <button aria-label="Maximize"><svg viewBox="0 0 10 10"><path fill="none" stroke="#222" d="M1.500 1.500h7v7h-7z"/></svg></button>
        <button aria-label="Close"><svg viewBox="0 0 10 10"><path stroke="#222" d="M1 1l8 8M9 1L1 9"/></svg></button>
      </div>
    </header>
    <nav class="menu">
      <button>File</button><button>Edit</button><button>View</button><button>Element</button><button>Screen</button><button>Tools</button><button>Options</button><button>Window</button><button>Help</button>
    </nav>

    <div class="bar">
      <div class="grp">
        <button aria-label="New"><svg><use href="#doc"/></svg></button><button aria-label="Open"><svg><use href="#open"/></svg></button><button aria-label="Save"><svg><use href="#save"/></svg></button><button aria-label="Export"><svg><use href="#export"/></svg></button><i></i>
        <button aria-label="Undo"><svg><use href="#undo"/></svg></button><button aria-label="Redo"><svg><use href="#redo"/></svg></button><i></i>
        <button aria-label="Cut"><svg><use href="#cut"/></svg></button><button aria-label="Copy"><svg><use href="#copy"/></svg></button><button aria-label="Paste"><svg><use href="#paste"/></svg></button><button aria-label="Find"><svg><use href="#find"/></svg></button><i></i>
        <button aria-label="New screen"><svg><use href="#newscr"/></svg></button><button aria-label="Open screen"><svg><use href="#openscr"/></svg></button><i></i>
        <button aria-label="Download"><svg><use href="#down"/></svg></button><button aria-label="About"><svg><use href="#info"/></svg></button>
      </div>
      <div class="grp">
        <select class="sel-zoom" aria-label="Zoom"><option>100%</option></select>
        <button aria-label="Zoom in"><svg><use href="#zin"/></svg></button><button aria-label="Zoom out"><svg><use href="#zout"/></svg></button><button aria-label="Zoom fit"><svg><use href="#zno"/></svg></button><i></i>
        <button aria-label="Rotate left"><svg><use href="#rotl"/></svg></button><button aria-label="Rotate right"><svg><use href="#rotr"/></svg></button><button aria-label="Flip horizontal"><svg><use href="#flipa"/></svg></button><button aria-label="Flip vertical"><svg><use href="#flipb"/></svg></button>
      </div>
    </div>

    <div class="bar">
      <div class="grp">
        <select class="sel-size" aria-label="Font size" disabled><option>12</option></select>
        <select class="sel-font" aria-label="Font" disabled><option>Verdana</option></select>
        <button aria-label="Align text left"><svg><use href="#fa1"/></svg></button><button aria-label="Align text center"><svg><use href="#fa2"/></svg></button><button aria-label="Align text right"><svg><use href="#fa3"/></svg></button><i></i>
        <button aria-label="Text top"><svg><use href="#fa4"/></svg></button><button aria-label="Text middle"><svg><use href="#fa2"/></svg></button><button aria-label="Text bottom"><svg><use href="#fa5"/></svg></button><i></i>
        <button class="ltr u">A</button><button class="ltr tiny" aria-label="Text color list">▾</button><button class="ltr">B</button><button class="ltr it">I</button><button class="ltr u">U</button>
      </div>
      <div class="grp">
        <select class="sel-lang" aria-label="Language"><option>Language1</option></select>
      </div>
      <div class="grp">
        <button aria-label="Line"><svg><use href="#line"/></svg></button><button aria-label="Document"><svg><use href="#bluedoc"/></svg></button><button aria-label="Same size"><svg><use href="#al1"/></svg></button><button aria-label="Same width"><svg><use href="#al2"/></svg></button><button aria-label="Same height"><svg><use href="#al3"/></svg></button><i></i>
        <button aria-label="Left"><svg><use href="#al4"/></svg></button><button aria-label="Center"><svg><use href="#al1"/></svg></button><button aria-label="Right"><svg><use href="#al5"/></svg></button><i></i>
        <button aria-label="Top"><svg><use href="#al6"/></svg></button><button aria-label="Middle"><svg><use href="#al3"/></svg></button><button aria-label="Bottom"><svg><use href="#al7"/></svg></button>
      </div>
    </div>

    <div class="bar">
      <div class="grp elements">
        <button aria-label="Button"><svg><use href="#e1"/></svg></button><button aria-label="Meter"><svg><use href="#e2"/></svg></button><button aria-label="Bar"><svg><use href="#e3"/></svg></button><button aria-label="Pipe"><svg><use href="#e4"/></svg></button><button aria-label="Pie"><svg><use href="#e5"/></svg></button><button aria-label="Indicator"><svg><use href="#e6"/></svg></button><button aria-label="Data display"><svg><use href="#e7"/></svg></button><button aria-label="Graph display"><svg><use href="#e8"/></svg></button><button aria-label="Input"><svg><use href="#e9"/></svg></button><button aria-label="Curve"><svg><use href="#e10"/></svg></button><button aria-label="Sampling"><svg><use href="#e11"/></svg></button><button aria-label="Alarm"><svg><use href="#e12"/></svg></button><button aria-label="Keypad"><svg><use href="#e13"/></svg></button><button aria-label="Slider"><svg><use href="#e14"/></svg></button><button aria-label="Picture"><svg><use href="#e15"/></svg></button><button aria-label="Recipe"><svg><use href="#e16"/></svg></button><button aria-label="Drawing"><svg><use href="#e17"/></svg></button>
      </div>
      <div class="grp">
        <select class="sel-state" aria-label="Element state" disabled><option>0 - ##.#</option></select>
        <button class="num">0</button><button class="num">1</button>
      </div>
      <div class="grp view">
        <select class="sel-view" aria-label="State selection"><option>State selectio</option></select>
        <button aria-label="Properties"><svg><use href="#s1"/></svg></button><i></i>
        <button aria-label="Back"><svg><use href="#s2"/></svg></button><button aria-label="Forward"><svg><use href="#s3"/></svg></button><button aria-label="Compile"><svg><use href="#s4"/></svg></button><button aria-label="Download screen"><svg><use href="#s5"/></svg></button><button aria-label="Download all"><svg><use href="#s6"/></svg></button><button aria-label="Upload"><svg><use href="#s7"/></svg></button><i></i>
        <button aria-label="Simulate"><svg><use href="#s8"/></svg></button><button aria-label="Stop"><svg><use href="#s9"/></svg></button><i></i>
        <button aria-label="Layout"><svg><use href="#s10"/></svg></button>
      </div>
    </div>

    <div class="work">
      <div class="upper">
        <aside class="tools">
          <button aria-label="Pen"><svg><use href="#t1"/></svg></button><button aria-label="Rectangle"><svg><use href="#t2"/></svg></button><button aria-label="Circle"><svg><use href="#t3"/></svg></button><button aria-label="Polygon"><svg><use href="#t4"/></svg></button><button aria-label="Text"><svg><use href="#t5"/></svg></button><button aria-label="Scale"><svg><use href="#t6"/></svg></button><button aria-label="Table"><svg><use href="#t7"/></svg></button>
        </aside>

        <section class="mdi">
          <header>
            <svg viewBox="0 0 12 12"><path fill="#173c48" d="M0 1h12v10H0z"/><path fill="#5fb4c0" d="M1 2h10v6H1z"/><path stroke="#cfe" d="M3 9.500h2M7 9.500h2"/></svg>
            <h2>1 - Screen_1</h2>
            <button aria-label="Minimize screen"><svg viewBox="0 0 12 10"><path fill="#fff" stroke="#56738e" d="M2.500 5.500h7v2h-7z"/></svg></button>
            <button aria-label="Restore screen"><svg viewBox="0 0 12 10"><path fill="#fff" stroke="#56738e" d="M2.500 1.500h7v7h-7z"/><path fill="#56738e" d="M4 4h4v3H4z"/></svg></button>
            <button class="red" aria-label="Close screen"><svg viewBox="0 0 12 10"><path stroke="#fff" stroke-width="2" d="M3 2l6 6M9 2L3 8"/></svg></button>
          </header>
          <div class="mdi-body">
            <div class="canvas">
              <button class="hmi auto">M2 AUTO</button>
              <div class="timer k1"><p>TIEMPO<br>PAUSA<br>T3</p><div><output>1.2</output></div><b>#.#</b></div>
              <div class="timer k2"><p>TIEMPO<br>INYECCION<br>T1</p><div><output>12.3</output></div><b>##.#</b></div>
              <div class="timer k3"><p>TIEMPO<br>ENFRIA<br>T2</p><div><output>12.3</output></div><b>##.#</b></div>
              <div class="timer k4"><p>TIEMPO<br>CIERRE<br>T4</p><div><output>1.2</output></div><b>#.#</b></div>
              <button class="hmi y3">Y3</button>
              <svg class="cursor" viewBox="0 0 10 15"><path fill="#fff" stroke="#444" d="M1 1v11l2.500-2.500L5.500 14l2-1-2-4H9z"/></svg>
            </div>
            <div class="scroll-v"><svg><use href="#up"/></svg><div class="track"><div class="thumb two-thirds"></div></div><svg><use href="#dn"/></svg></div>
          </div>
        </section>

        <section class="panel property">
          <header><h2>Property</h2><button aria-label="Float"><svg><use href="#restore"/></svg></button><button aria-label="Close"><svg><use href="#cross"/></svg></button></header>
          <div class="picker">
            <select aria-label="Object"><option>Screen_1</option></select>
            <label class="spin"><input aria-label="Index" value="0" disabled><span>▴<br>▾</span></label>
          </div>
          <div class="sheet">
            <table>
              <tr><th>Screen Name</th><td>Screen_1</td></tr>
              <tr><th>Screen Properties</th><td>Detail...</td></tr>
              <tr><th>Background Color</th><td><span class="swatch"></span>RGB(252, 252, 252)</td></tr>
              <tr><th>Screen Lock addr.</th><td>None</td></tr>
              <tr class="group"><th colspan="2"><button aria-label="Collapse">−</button>Screen Macro</th></tr>
              <tr class="sub"><th>Screen Open Mac</th><td>0</td></tr>
              <tr class="sub"><th>Screen Close Macr</th><td>0</td></tr>
              <tr class="sub"><th>Screen Cycle Macr</th><td>0</td></tr>
              <tr><th>Width</th><td>480</td></tr>
              <tr><th>Height</th><td>272</td></tr>
            </table>
          </div>
        </section>
      </div>

      <div class="lower">
        <section class="panel manager">
          <header><h2>Screen Manager</h2><button aria-label="Float"><svg><use href="#restore"/></svg></button><button aria-label="Close"><svg><use href="#cross"/></svg></button></header>
          <div class="gallery">
            <figure>
              <svg viewBox="0 0 360 222">
                <path fill="#fcfcfc" d="M0 0h360v222H0z"/>
                <g stroke="#333" stroke-width="3"><path fill="#aaa" d="M144 14h66v17h-66zM258 149h84v17h-84z"/></g>
                <path fill="#7ff5ee" d="M27 48h56v43H27zM110 48h62v43h-62zM193 48h56v43h-56zM274 48h56v43h-56z"/>
                <path fill="#c9b3cf" stroke="#b56fc4" stroke-width="5" d="M29 93h52v26H29zM112 93h57v26h-57zM195 93h52v26h-52zM276 93h52v26h-52z"/>
                <path fill="#ffff80" stroke="#cfc98a" d="M28 122h55v26H28zM111 122h58v26h-58zM193 122h56v26h-56zM274 122h56v26h-56z"/>
                <g class="mini"><text x="177" y="27">M2 AUTO</text><text x="300" y="162">Y3</text><text x="55" y="59">TIEMPO</text><text x="55" y="73">PAUSA</text><text x="55" y="87">T3</text><text x="140" y="59">TIEMPO</text><text x="140" y="73">INYECCION</text><text x="140" y="87">T1</text><text x="221" y="59">TIEMPO</text><text x="221" y="73">ENFRIA</text><text x="221" y="87">T2</text><text x="302" y="59">TIEMPO</text><text x="302" y="73">CIERRE</text><text x="302" y="87">T4</text><text x="55" y="140">#.#</text><text x="140" y="140">##.#</text><text x="221" y="140">##.#</text><text x="302" y="140">#.#</text></g>
                <g class="mini soft"><text x="55" y="111">1.2</text><text x="140" y="111">12.3</text><text x="221" y="111">12.3</text><text x="302" y="111">1.2</text></g>
                <path fill="#fff6cf" stroke="#c99b35" stroke-width="5" d="M1 24L22 4l21 20h-6v15H8V24z"/><path fill="#efc4b0" stroke="#9c7a50" stroke-width="3" d="M18 24h9v15h-9z"/>
              </svg>
              <figcaption>Screen_1<br>[1]</figcaption>
            </figure>
          </div>
        </section>

        <section class="panel output">
          <header><h2>Output</h2><button aria-label="Float"><svg><use href="#restore"/></svg></button><button aria-label="Close"><svg><use href="#cross"/></svg></button></header>
          <div class="log">
            <div class="log-rows">
              <table>
                <thead><tr><th>o</th><th>Action</th></tr></thead>
                <tbody>
                  <tr><td>15]</td><td>Create element</td></tr>
                  <tr><td>16]</td><td>Undo create element</td></tr>
                  <tr><td>17]</td><td>Create element</td></tr>
                  <tr><td>18]</td><td>Undo create element</td></tr>
                  <tr><td>19]</td><td>Modify element property</td></tr>
                </tbody>
              </table>
              <div class="scroll-v"><svg><use href="#up"/></svg><div class="track low"><div class="thumb half"></div></div><svg><use href="#dn"/></svg></div>
            </div>
            <div class="scroll-h"><svg><use href="#lf"/></svg><div class="track"><div class="thumb"></div></div><svg><use href="#rt"/></svg></div>
          </div>
          <div class="tabs"><button class="on">Record</button><button>Ouput</button></div>
        </section>
      </div>
    </div>

    <div class="bar bottom">
      <div class="grp">
        <button aria-label="Group"><svg><use href="#b1"/></svg></button><button aria-label="Ungroup"><svg><use href="#b2"/></svg></button><i></i>
        <button aria-label="Bring forward"><svg><use href="#b3"/></svg></button><button aria-label="Send backward"><svg><use href="#b4"/></svg></button><button aria-label="Bring to front"><svg><use href="#b5"/></svg></button><button aria-label="Send to back"><svg><use href="#b6"/></svg></button><i></i>
        <button aria-label="Align left"><svg><use href="#b7"/></svg></button><button aria-label="Align right"><svg><use href="#b8"/></svg></button><button aria-label="Align top"><svg><use href="#b9"/></svg></button><button aria-label="Align bottom"><svg><use href="#b10"/></svg></button><i></i>
        <button aria-label="Center vertically"><svg><use href="#b11"/></svg></button><button aria-label="Center horizontally"><svg><use href="#b12"/></svg></button><i></i>
        <button aria-label="Space across"><svg><use href="#b13"/></svg></button><button aria-label="Space down"><svg><use href="#b14"/></svg></button><i></i>
        <button aria-label="Match width"><svg><use href="#b15"/></svg></button><button aria-label="Match height"><svg><use href="#b16"/></svg></button><button aria-label="Match both"><svg><use href="#b17"/></svg></button>
      </div>
    </div>
    <footer class="status"><span>Download:USB</span><span>[73,176]</span><span>DOP-B03S211 65536 Colors Rotate 0 degree</span><svg viewBox="0 0 9 9"><path fill="#bbb" d="M7 1h2v2H7zM7 4h2v2H7zM7 7h2v2H7zM4 4h2v2H4zM4 7h2v2H4zM1 7h2v2H1z"/></svg></footer>
  </section>
</main>

<footer class="taskbar">
  <button class="start" aria-label="Start"><svg viewBox="0 0 12 12"><path fill="#fff" d="M0 1.700l5-.7v4.700H0zM5.700.900L12 0v5.700H5.700zM0 6.400h5V11l-5-.7zM5.700 6.400H12V12l-6.300-.9z"/></svg></button>
  <label class="search">
    <svg class="glass" viewBox="0 0 14 14"><circle cx="8.500" cy="5.500" r="4" fill="none" stroke="#333" stroke-width="1.200"/><path stroke="#333" stroke-width="1.400" d="M5.500 8.500L1 13"/></svg>
    <input type="text" placeholder="Type here to search" aria-label="Search">
    <svg class="plant" viewBox="0 0 54 26"><path fill="#b69a93" d="M8 9h18v14H8z"/><path fill="#8a6962" d="M8 9h18v3H8zM6 22h22v3H6z"/><path fill="#d98fd8" d="M2 6l4-3 1 4-3 2z"/><path stroke="#bbb" d="M11 2v4M15 1v5M19 2v4"/><path fill="none" stroke="#7aa63a" stroke-width="2" d="M34 25c2-8 6-14 12-22"/><path fill="#8fbf45" d="M38 15c-6-1-8-5-8-9 5 1 8 4 8 9zM42 9c-3-4-2-7 0-9 3 3 3 6 0 9zM38 18c3-6 8-7 12-6-2 5-6 7-12 6zM36 22c-5 0-8-3-9-6 4 0 8 2 9 6z"/><path fill="#e3c24d" d="M44 22h5v2h-5z"/></svg>
  </label>
  <nav class="apps">
    <button aria-label="Task view"><svg class="thin" viewBox="0 0 18 18"><path fill="none" stroke="#d5dfe0" stroke-width="1.500" d="M3 3v2h7V3M3 7h7v5H3zM3 16v-2h7v2M14 2v3M14 8v8"/><path fill="#d5dfe0" d="M13 5h3v3h-3z"/></svg></button>
    <button aria-label="Edge"><svg viewBox="0 0 18 18"><circle cx="9" cy="9" r="9" fill="url(#gEdge)"/><path fill="#4fcf7a" d="M2 4c5-6 16-3 16 5 0 3-3 4-6 3 1-4-3-7-10-4z"/><path fill="#1f3f4a" d="M8 9c-1 4 3 6 8 5-2 3-9 2-9-2z"/></svg></button>
    <button aria-label="File Explorer"><svg viewBox="0 0 18 18"><path fill="#d9a62d" d="M1 2h6l2 2h8v13H1z"/><path fill="#f7d774" d="M1 6h16v11H1z"/><path fill="#3e8fc4" d="M4 11h10v6h-3v-3H7v3H4z"/></svg></button>
    <button class="active" aria-label="DOPSoft"><svg viewBox="0 0 18 18"><path fill="#dfeef5" d="M0 1h18v16H0z"/><path fill="#296f9c" d="M2 3h14v12H2z"/><path fill="#eaf4f8" d="M3 4h12v8H3z"/><path fill="#2c86ad" d="M6 12l2-1V5h2v5l3 1v3l-2 3H8z"/></svg></button>
    <button class="open" aria-label="Filmora"><svg viewBox="0 0 18 18"><path fill="#1e3340" d="M1 1h16v12H1z"/><path fill="#6ff0d0" d="M7 2l3 2-1 3 3 1-3 4-2-1 2-3-2-2z"/><path fill="#fff" d="M2 12h14v4H2z"/><path stroke="#222" d="M7 14h4"/></svg></button>
  </nav>
  <div class="tray">
    <svg class="help" viewBox="0 0 18 18"><circle cx="9" cy="9" r="8" fill="#2b87a8" stroke="#d6edf5" stroke-width="1.500"/><path fill="none" stroke="#fff" stroke-width="2" d="M6.500 7c0-4 5-4 5-1 0 2-2.500 2-2.500 4.500M9 12.500v2"/><path fill="#e5b949" d="M12 11l5 2-1 4-4 1-2-3z"/></svg>
    <button class="weather"><svg viewBox="0 0 18 18"><circle cx="8" cy="7" r="6" fill="#f4c542"/><path fill="#e3e9ef" d="M3 16c-3-1-2-5 1-5 1-4 7-4 8-1 5-1 6 6 2 6z"/></svg>104°F&nbsp; Partly sunny</button>
    <svg viewBox="0 0 12 12"><path fill="none" stroke="#eee" stroke-width="1.300" d="M2 8l4-4 4 4"/></svg>
    <svg viewBox="0 0 14 12"><path fill="#f0f0f0" d="M3 10c-4-1-3-5 0-5 1-4 7-4 8 0 4 0 3 5 0 5z"/></svg>
    <svg viewBox="0 0 12 12"><path fill="#eee" d="M4 0h4v7H4z"/><path fill="none" stroke="#eee" d="M3 5v2c1 2 5 2 6 0V5M6 8v3M4 11.500h4"/></svg>
    <svg viewBox="0 0 14 12"><path fill="none" stroke="#eee" stroke-width="1.200" d="M5 3h7v7H5zM13 5v3M1 1v3h3V1M2.500 4v5H5"/><path fill="#eee" d="M7 5h3v4H7z"/></svg>
    <svg viewBox="0 0 14 12"><path fill="none" stroke="#eee" d="M1 4.500h2l3-3v9l-3-3H1zM8 4c1 1 1 3 0 4M10 2.500c2 2 2 5 0 7M12 1c2.500 3 2.500 7 0 10"/></svg>
    <svg viewBox="0 0 12 12"><path fill="none" stroke="#eee" stroke-width="1.200" d="M3 2h6v6l-2 2H5L3 8zM4 .5h4M6 10v2"/><circle cx="6" cy="5" r="1.500" fill="none" stroke="#eee"/></svg>
    <span class="lang">ESP</span>
    <time>6:41 PM<br>5/21/2022</time>
    <button class="note" aria-label="Notifications"><svg viewBox="0 0 14 14"><path fill="none" stroke="#eee" d="M1.500 1.500h11v9h-3l-2 2.500v-2.500h-6z"/></svg></button>
  </div>
</footer>
</body>
</html>
```

FILE: styles.css
```css
* { box-sizing: border-box; }

html, body { height: 100%; }

body {
  margin: 0;
  display: flex;
  flex-direction: column;
  overflow: hidden;
  font-family: "Open Sans", "Noto Sans", sans-serif;
  font-size: 9px;
  color: #222;
}

h1, h2, p, figure { margin: 0; font-size: inherit; font-weight: inherit; }

button, select, input {
  font: inherit;
  color: inherit;
  margin: 0;
  padding: 0;
  border: 0;
  background: none;
}

svg { display: block; flex: none; }

.sprite { position: absolute; width: 0; height: 0; }

/* Lettering inside icons */
.g123, .gn, .ga, .gpdf, .g360, .gj { text-anchor: middle; }
.g123 { font: bold 8px "Liberation Sans", sans-serif; fill: #45457a; }
.gn { font: bold 14px "Liberation Serif", serif; fill: #15157e; }
.ga { font: bold 20px "Liberation Serif", serif; fill: #1a1a63; }
.gpdf { font: bold 11px "Open Sans", sans-serif; fill: #fff; }
.small { font-size: 6px; }
.g360 { font: 6px "Open Sans", sans-serif; fill: #6a7f90; }
.gj { font: 11px "Open Sans", sans-serif; fill: #e6f2ef; }

/* Desktop */
.desktop {
  position: relative;
  flex: 1;
  min-height: 0;
  display: flex;
  justify-content: space-between;
  background:
    radial-gradient(ellipse 110px 190px at 860px 210px, rgba(16, 98, 226, .8), rgba(16, 98, 226, 0)),
    linear-gradient(90deg, #10b4ee 0, #11b6ee 11%, #0f9fdf 30%, #0c7fd2 55%, #0a4cbc 80%, #0b3fae 100%);
}

.peek {
  position: absolute;
  top: 4px;
  left: 348px;
  width: 35px;
  height: 6px;
  background: #5fc48a;
  border-radius: 8px 8px 0 0;
}

.icons {
  display: grid;
  grid-auto-rows: 74px;
  align-content: start;
  padding-top: 6px;
}

.icons-left { grid-template-columns: 56px 56px; }

.icons-right {
  grid-template-columns: 56px 56px;
  column-gap: 57px;
  padding-right: 12px;
}

.col2 { grid-column: 2; }

.ico {
  position: relative;
  display: flex;
  flex-direction: column;
  align-items: center;
  gap: 2px;
  color: #fff;
  text-decoration: none;
  text-align: center;
  line-height: 11px;
  white-space: nowrap;
  text-shadow: 0 1px 1px #000, 0 0 2px #000, 1px 1px 2px #000;
}

.ico svg { width: 36px; height: 36px; }
.ico text { text-shadow: none; }

.ico .ln {
  position: absolute;
  left: 10px;
  top: 27px;
  width: 9px;
  height: 9px;
}

/* Application window */
.window {
  position: absolute;
  top: 9px;
  bottom: 29px;
  left: 117px;
  right: 172px;
  display: flex;
  flex-direction: column;
  background: #f0f0f0;
  box-shadow: 0 0 0 1px #1b7ba6, 0 2px 8px rgba(0, 20, 60, .5);
}

.titlebar {
  display: flex;
  align-items: center;
  gap: 4px;
  height: 21px;
  padding-left: 6px;
  background: #fff;
  font-family: Roboto, sans-serif;
}

.titlebar h1 { flex: 1; }
.app { width: 12px; height: 12px; }

.wctl { display: flex; }

.wctl button {
  width: 34px;
  height: 21px;
  display: grid;
  place-items: center;
}

.wctl svg { width: 10px; height: 10px; }

.menu {
  display: flex;
  gap: 9px;
  height: 16px;
  padding-left: 5px;
  background: #fff;
  border-bottom: 1px solid #dcdcdc;
}

.bar {
  display: flex;
  height: 19px;
  flex: none;
  padding-left: 1px;
}

.grp {
  display: flex;
  align-items: center;
  padding: 0 1px 0 3px;
  border: 1px solid #d4d4d4;
  border-left: 2px solid #c4c4c4;
  border-top-color: #fafafa;
  background: #f4f4f4;
  margin-right: 2px;
}

.grp button {
  width: 17px;
  height: 16px;
  display: grid;
  place-items: center;
}

.grp svg { width: 13px; height: 13px; }

.grp i {
  width: 1px;
  height: 14px;
  margin: 0 2px;
  background: #ccc;
}

.elements { width: 300px; }
.elements button { flex: 1; }
.view { padding-left: 1px; }

.grp .ltr {
  font: bold 12px "Liberation Serif", serif;
  color: #a2a2a2;
}

.grp .it { font-style: italic; }
.grp .u { text-decoration: underline; }
.grp .tiny { width: 14px; font-size: 9px; }

.grp .num {
  width: 13px;
  height: 12px;
  margin: 0 2px;
  background: #5b8bd2;
  color: #fff;
  font: bold 9px/12px "Liberation Serif", serif;
}

select {
  appearance: none;
  height: 16px;
  padding-left: 4px;
  border: 1px solid #ccc;
  border-radius: 0;
  background: #e6e6e6 url("data:image/svg+xml,%3Csvg xmlns='http://www.w3.org/2000/svg' viewBox='0 0 8 8'%3E%3Cpath fill='none' stroke='%23666' d='M1 3l3 3 3-3'/%3E%3C/svg%3E") right 2px center / 8px 8px no-repeat;
}

select:disabled { color: #888; opacity: 1; }
.sel-zoom { width: 53px; }
.sel-size { width: 34px; margin-right: 4px; background-color: #d3d3d3; }
.sel-font { width: 110px; margin-right: 4px; background-color: #f8f8f8; font: 10px "DejaVu Sans", sans-serif; }
.sel-lang { width: 112px; }
.sel-state { width: 124px; margin-right: 4px; background-color: #d0d0d0; font-family: "DejaVu Sans", sans-serif; }
.sel-view { width: 66px; padding-left: 1px; font-size: 8px; }

/* Work area */
.work {
  flex: 1;
  min-height: 0;
  display: grid;
  grid-template-rows: 221fr 158fr;
  background: #c3c9d0;
}

.upper {
  min-height: 0;
  display: grid;
  grid-template-columns: 18px 1fr 220px;
  column-gap: 1px;
}

.lower {
  min-height: 0;
  display: grid;
  grid-template-columns: 1fr 177px;
  column-gap: 4px;
  padding: 0 1px 2px;
}

.tools {
  display: flex;
  flex-direction: column;
  align-items: center;
  padding-top: 8px;
  gap: 2px;
  background: #f1f1f1;
}

.tools svg { width: 13px; height: 14px; }

.mdi {
  display: flex;
  flex-direction: column;
  padding: 2px 8px 6px 5px;
  border: 2px solid #3c6a80;
  border-radius: 5px 5px 0 0;
  background: linear-gradient(180deg, #93aecb 0, #b5d0e2 22px, #b7d6e2 100%);
  min-height: 0;
}

.mdi header {
  display: flex;
  align-items: center;
  gap: 2px;
  height: 20px;
  flex: none;
}

.mdi header > svg { width: 12px; height: 12px; }
.mdi h2 { flex: 1; padding-left: 1px; color: #222; }

.mdi header button {
  width: 23px;
  height: 13px;
  display: grid;
  place-items: center;
  border: 1px solid #6b88a5;
  border-radius: 2px;
  background: linear-gradient(#d9e7f3, #a9c2d9);
}

.mdi header button svg { width: 12px; height: 10px; }
.mdi header .red { background: linear-gradient(#d98379, #b42c24); border-color: #7c2a2a; }

.mdi-body {
  flex: 1;
  min-height: 0;
  display: flex;
  border-top: 1px solid #6a8498;
  background: #ababab;
}

.canvas {
  position: relative;
  width: 361px;
  background: #fcfcfc;
  border-right: 1px solid #777;
}

.scroll-v {
  width: 13px;
  margin-left: auto;
  display: flex;
  flex-direction: column;
  align-items: center;
  gap: 3px;
  padding: 3px 0;
  background: #f2f2f2;
}

.scroll-v svg, .scroll-h svg { width: 7px; height: 7px; }
.track { flex: 1; width: 11px; display: flex; flex-direction: column; }
.low { justify-content: flex-end; }
.thumb { background: #cdcdcd; }
.two-thirds { height: 76%; }
.half { height: 60%; }

/* Objects placed on the screen being edited */
.hmi {
  position: absolute;
  height: 20px;
  border: 2px solid;
  border-color: #e6e6e6 #222 #222 #ddd;
  box-shadow: -1px -1px 0 #888;
  background: #b4b4b4;
  color: #000;
  font: bold 9px "Liberation Sans", sans-serif;
  text-shadow: 0 0 1px #000, 0 0 1px #000;
}

.auto { left: 145px; top: 3px; width: 66px; }
.y3 { left: 261px; top: 140px; width: 85px; }

.timer {
  position: absolute;
  top: 42px;
  width: 56px;
  text-align: center;
  color: #000;
}

.k1 { left: 27px; top: 41px; }
.k2 { left: 110px; width: 60px; }
.k3 { left: 193px; }
.k4 { left: 274px; }

.timer p {
  height: 41px;
  padding-top: 1px;
  background: #80fff5;
  font: bold 9px/13px "Liberation Sans", sans-serif;
  text-shadow: 0 0 1px #000, 0 0 1px #000;
}

.k2 p { margin-right: -2px; }

.timer div {
  height: 30px;
  padding: 4px;
  background: #cf78d8;
}

.timer output {
  display: block;
  height: 22px;
  border: 2px solid;
  border-color: #444 #eee #eee #444;
  background: #bebebe;
  color: #555;
  font: 12px/18px "DejaVu Sans", sans-serif;
}

.timer b {
  display: block;
  height: 27px;
  border: 1px solid #c4c489;
  background: #ffff80;
  font: 11px/25px "DejaVu Sans", sans-serif;
}

.cursor { position: absolute; left: 54px; top: 131px; width: 10px; height: 15px; }

/* Docked panels */
.panel {
  display: flex;
  flex-direction: column;
  min-width: 0;
  min-height: 0;
  background: #f0f0f0;
  font-family: "Liberation Serif", serif;
}

.panel > header {
  display: flex;
  align-items: center;
  gap: 4px;
  height: 14px;
  flex: none;
  padding: 0 4px 0 2px;
  background: linear-gradient(#c8dcf6, #adc6ea);
  border-bottom: 1px solid #9aa9bd;
}

.panel h2 { flex: 1; }
.panel > header svg { width: 8px; height: 8px; }

.picker { display: flex; gap: 1px; height: 17px; padding: 1px; }
.picker select { flex: 1; padding-left: 0; }
.spin { display: flex; width: 44px; border: 1px solid #d5d5d5; background: #f3f3f3; color: #888; }
.spin input { width: 28px; padding-left: 2px; }
.spin span { width: 14px; text-align: center; font: 8px/7px "DejaVu Sans", sans-serif; }

.sheet {
  flex: 1;
  min-height: 0;
  margin: 1px 3px 0 1px;
  border: 1px solid #8a8a8a;
  background: #fff;
  font-family: "Noto Sans", sans-serif;
}

table { border-collapse: collapse; table-layout: fixed; width: 100%; }

.sheet table { height: 157px; }

.sheet th, .sheet td {
  padding: 0 0 0 2px;
  border-bottom: 1px solid #d6d6d0;
  text-align: left;
  font-weight: normal;
  line-height: 14px;
  white-space: nowrap;
}

.sheet th {
  width: 105px;
  padding-left: 17px;
  border-right: 1px solid #d6d6d0;
  background: linear-gradient(90deg, #ecebdf, #f8faf4);
}

.sheet .sub th {
  padding-left: 27px;
  background: linear-gradient(90deg, #fff 11px, #ecebdf 11px, #f8faf4);
}

.sheet .group th { padding-left: 3px; border-right: 0; background: linear-gradient(90deg, #c6d2ec, #f6fafa); }

.group button {
  width: 9px;
  height: 9px;
  margin-right: 5px;
  border: 1px solid #8ca0c8;
  background: #eef2fa;
  line-height: 6px;
  vertical-align: 1px;
}

.swatch {
  display: inline-block;
  width: 11px;
  height: 11px;
  border: 1px solid #444;
  border-radius: 2px;
  background: #fcfcfc;
  vertical-align: -2px;
}

.gallery {
  flex: 1;
  min-height: 0;
  margin: 0 1px 0 3px;
  padding: 22px 6px 0;
  border: 1px solid #6f6f6f;
}

.gallery figure {
  width: 113px;
  padding: 1px 2px 0;
  border: 2px solid #8b8b8b;
  background: #c6c6c6;
}

.gallery svg { width: 100%; height: auto; border-bottom: 1px solid #777; }
.gallery figcaption { padding: 3px 0 1px; text-align: center; line-height: 11px; }
.mini { font: bold 13px "Liberation Sans", sans-serif; text-anchor: middle; }
.soft { fill: #555; }

.log {
  display: flex;
  flex-direction: column;
  margin: 4px 5px 0 5px;
  border: 1px solid #8f8f8f;
  background: #f2f2f2;
}

.log-rows { display: flex; height: 100px; background: #e3e6d9; }
.log-rows table { width: auto; flex: 1; align-self: flex-start; }
.log-rows th { height: 19px; background: #fff; }
.log-rows th, .log-rows td { padding: 0 0 0 4px; text-align: left; font-weight: normal; border-right: 1px solid #eeefe8; white-space: nowrap; }
.log-rows tr > :first-child { width: 27px; padding-left: 1px; }
.log-rows td { height: 14px; line-height: 13px; border-bottom: 1px solid #eeefe8; }

.scroll-h {
  display: flex;
  align-items: center;
  height: 13px;
  gap: 4px;
  padding: 0 16px 0 4px;
}

.scroll-h .track { height: 11px; padding-left: 12px; }
.scroll-h .thumb { height: 11px; }

.tabs { display: flex; padding-left: 5px; }
.tabs button { height: 15px; padding: 0 5px 0 2px; border: 1px solid #ddd; border-top: 0; }
.tabs .on { height: 16px; padding: 0 6px 0 3px; background: #fff; }

.bottom { height: 20px; }

.status {
  display: grid;
  grid-template-columns: 86px 151px 1fr 12px;
  align-items: center;
  padding-left: 263px;
  height: 15px;
  border-top: 1px solid #dcdcdc;
  font-family: Roboto, sans-serif;
}

.status svg { width: 9px; height: 9px; }

/* Taskbar */
.taskbar {
  display: flex;
  height: 30px;
  flex: none;
  background: linear-gradient(90deg, #1c3b40, #1b4045 45%, #16303f 75%, #1c2c48);
  color: #f2f2f2;
}

.taskbar button { display: grid; place-items: center; }
.start { width: 36px; }
.start svg { width: 13px; height: 13px; }

.search {
  display: flex;
  align-items: center;
  gap: 6px;
  width: 257px;
  padding: 0 4px 0 10px;
  background: #f2f2f1;
  color: #333;
}

.search input { flex: 1; min-width: 0; font: 11px Roboto, sans-serif; outline: 0; }
.search input::placeholder { color: #444; opacity: 1; }
.glass { width: 14px; height: 14px; }
.plant { width: 52px; height: 26px; }

.apps { display: flex; }
.apps button { width: 37px; border-bottom: 2px solid transparent; }
.apps svg { width: 18px; height: 18px; }
.apps .thin { width: 14px; height: 14px; }
.apps .active { background: #4a7584; border-color: #7db8dc; }
.apps .open { border-color: #7db8dc; }

.tray {
  display: flex;
  align-items: center;
  gap: 5px;
  margin-left: auto;
  padding-right: 17px;
}

.tray > svg { width: 13px; height: 12px; }
.tray .help { width: 18px; height: 18px; margin-right: 26px; }

.taskbar .weather {
  display: flex;
  align-items: center;
  gap: 7px;
  margin-right: 5px;
  font-size: 10px;
}

.weather svg { width: 16px; height: 16px; }
.lang { margin: 0 6px 0 5px; font-size: 8px; }
.tray time { text-align: center; font-family: Roboto, sans-serif; line-height: 14px; }
.note { margin-left: 6px; }
.note svg { width: 14px; height: 14px; }
```
